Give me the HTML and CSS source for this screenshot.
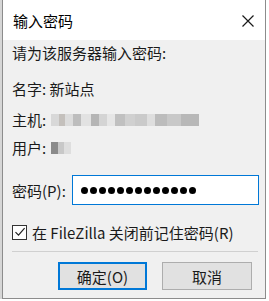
FILE: index.html
```html
<!DOCTYPE html>
<html lang="zh-CN">
<head>
<meta charset="utf-8">
<link rel="stylesheet" href="styles.css">
</head>
<body>
<div class="window">
  <div class="titlebar">
    <span class="title">输入密码</span>
    <svg class="close" width="12" height="12" viewBox="0 0 12 12"><path d="M0.5 0.5 L11.5 11.5 M11.5 0.5 L0.5 11.5" stroke="#1a1a1a" stroke-width="1.2" fill="none"/></svg>
  </div>
  <div class="content">
    <div class="row r1">请为该服务器输入密码:</div>
    <div class="row r2">名字: 新站点</div>
    <div class="row r3">主机: <span class="blur host"></span></div>
    <div class="row r4">用户: <span class="blur user"></span></div>
    <div class="pwrow">
      <span class="pwlabel">密码(P):</span>
      <div class="pwbox"><span class="dot"></span><span class="dot"></span><span class="dot"></span><span class="dot"></span><span class="dot"></span><span class="dot"></span><span class="dot"></span><span class="dot"></span><span class="dot"></span><span class="dot"></span><span class="dot"></span><span class="dot"></span><span class="dot"></span></div>
    </div>
    <div class="checkrow">
      <span class="checkbox"><svg width="12" height="12" viewBox="0 0 12 12"><path d="M1.5 6.2 L4.5 9.2 L10.6 2.2" stroke="#222" stroke-width="1.2" fill="none"/></svg></span>
      <span>在 FileZilla 关闭前记住密码(R)</span>
    </div>
    <div class="sep"></div>
    <div class="buttons">
      <div class="btn primary">确定(O)</div>
      <div class="btn">取消</div>
    </div>
  </div>
</div>
</body>
</html>
```
FILE: styles.css
```css
html, body {
  margin: 0;
  padding: 0;
  background: #ffffff;
}
body {
  font-family: "Noto Sans CJK SC", "Noto Sans", sans-serif;
  font-size: 15px;
  color: #1a1a1a;
}
.window {
  margin-left: 2px;
  width: 262px;
  height: 298px;
  border-left: 1px solid #8c8c8c;
  border-right: 1px solid #8c8c8c;
  border-bottom: 1px solid #8c8c8c;
  box-shadow: -2px 0 0 #d6d6d6;
  background: #f0f0f0;
  display: flex;
  flex-direction: column;
}
.titlebar {
  height: 40px;
  background: #ffffff;
  display: flex;
  align-items: center;
  padding-left: 10px;
  padding-right: 11px;
}
.title {
  flex: 1;
  color: #000;
  line-height: 20px;
  margin-top: 2px;
}
.close {
  display: block;
  margin-top: 1px;
}
.content {
  padding-left: 9px;
  display: flex;
  flex-direction: column;
}
.row {
  height: 26px;
  line-height: 26px;
  display: flex;
  align-items: center;
  white-space: pre;
}
.r2 { margin-top: 10px; }
.r3 { margin-top: 5px; }
.r4 { margin-top: 2px; }
.blur {
  display: inline-block;
  height: 12px;
}
.host {
  width: 148px;
  margin-left: 1px;
  background: linear-gradient(90deg, #d8d8d8 0 8px, #c4c0bc 8px 14px, #dcdcdc 14px 22px, #bdbdbd 22px 30px, #e2e2e2 30px 40px, #b5b5b5 40px 48px, #d4d4d4 48px 56px, #e6e6e6 56px 64px, #c0c0c0 64px 74px, #d0d0d0 74px 84px, #cacaca 84px 96px, #dedede 96px 104px, #bcbcbc 104px 116px, #c8c8c8 116px 130px, #b8b8b8 130px 148px);
}
.user {
  width: 20px;
  margin-left: 1px;
  height: 12px;
  background: linear-gradient(90deg, #8a8a8a 0 7px, #c8c8c8 7px 13px, #dedede 13px 20px);
}
.pwrow {
  margin-top: 14px;
  display: flex;
  align-items: center;
  height: 30px;
}
.pwlabel {
  width: 60px;
}
.pwbox {
  box-sizing: border-box;
  width: 187px;
  height: 30px;
  background: #fff;
  border: 1px solid #0078d7;
  display: flex;
  align-items: center;
  gap: 2px;
  padding-left: 8px;
}
.dot {
  width: 7px;
  height: 7px;
  border-radius: 50%;
  background: #000;
}
.checkrow {
  margin-top: 14px;
  height: 26px;
  display: flex;
  align-items: center;
  gap: 5px;
  color: #1a1a1a;
}
.checkbox {
  box-sizing: border-box;
  width: 15px;
  height: 15px;
  border: 1px solid #333;
  background: #fff;
  display: flex;
  align-items: center;
  justify-content: center;
}
.checkbox svg { display: block; }
.sep {
  margin-top: 6px;
  width: 246px;
  height: 1px;
  background: #d0d0d0;
}
.buttons {
  margin-top: 10px;
  display: flex;
  gap: 15px;
  padding-left: 46px;
}
.btn {
  box-sizing: border-box;
  width: 90px;
  height: 28px;
  background: #e1e1e1;
  border: 1px solid #adadad;
  display: flex;
  align-items: center;
  justify-content: center;
  color: #1a1a1a;
}
.btn.primary {
  width: 89px;
  border: 2px solid #0078d7;
}
```
